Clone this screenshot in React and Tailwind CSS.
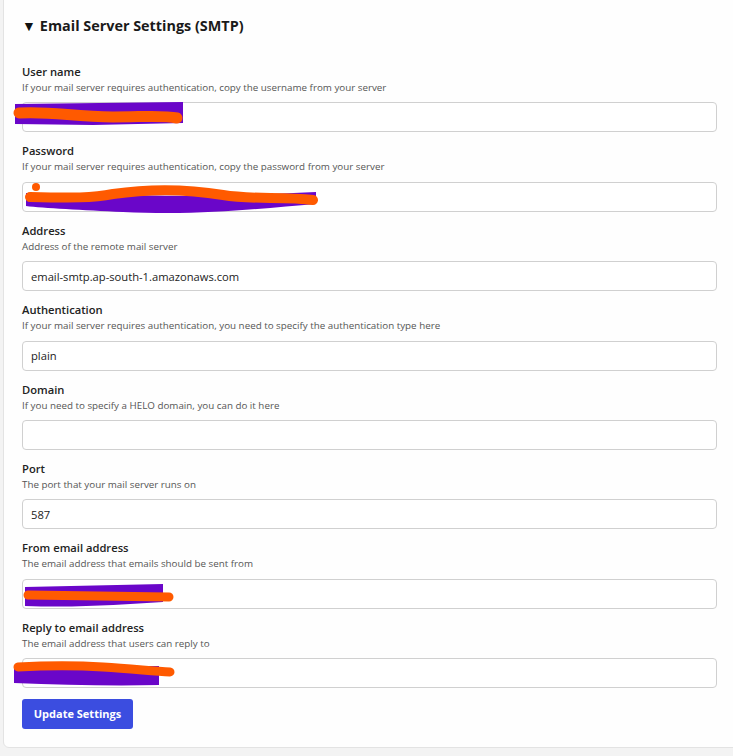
import React from "react";

const fields = [
  { label: "User name", help: "If your mail server requires authentication, copy the username from your server", value: "" },
  { label: "Password", help: "If your mail server requires authentication, copy the password from your server", value: "" },
  { label: "Address", help: "Address of the remote mail server", value: "email-smtp.ap-south-1.amazonaws.com" },
  { label: "Authentication", help: "If your mail server requires authentication, you need to specify the authentication type here", value: "plain" },
  { label: "Domain", help: "If you need to specify a HELO domain, you can do it here", value: "" },
  { label: "Port", help: "The port that your mail server runs on", value: "587" },
  { label: "From email address", help: "The email address that emails should be sent from", value: "" },
  { label: "Reply to email address", help: "The email address that users can reply to", value: "" },
];

// redaction scribbles drawn over the inputs, coords relative to the input box
const scribbles = {
  0: (
    <svg className="absolute left-[-9px] top-[-1px] overflow-visible" width="180" height="30">
      <path d="M2 3 L170 1 L170 22 L80 24 L2 23 Z" fill="#6a06c9" />
      <path d="M6 12 C40 10 60 16 100 16 C130 16 150 14 164 17" stroke="#ff5a00" strokeWidth="11" strokeLinecap="round" fill="none" />
    </svg>
  ),
  1: (
    <svg className="absolute left-[1px] top-[0px] overflow-visible" width="300" height="34">
      <path d="M3 11 C60 12 120 14 200 14 L293 10 L293 22 C240 26 180 34 100 30 C60 28 20 26 3 24 Z" fill="#6a06c9" />
      <path d="M7 15 C50 16 70 16 90 12 C130 6 170 8 200 13 C230 18 260 14 290 18" stroke="#ff5a00" strokeWidth="10" strokeLinecap="round" fill="none" />
      <circle cx="13" cy="5" r="4" fill="#ff5a00" />
    </svg>
  ),
  6: (
    <svg className="absolute left-[1px] top-[3px] overflow-visible" width="160" height="30">
      <path d="M2 5 L140 2 L140 20 C100 22 60 26 2 24 Z" fill="#6a06c9" />
      <path d="M5 13 L146 15" stroke="#ff5a00" strokeWidth="9" strokeLinecap="round" fill="none" />
    </svg>
  ),
  7: (
    <svg className="absolute left-[-9px] top-[3px] overflow-visible" width="170" height="30">
      <path d="M1 6 L146 5 L146 24 C100 25 50 24 1 22 Z" fill="#6a06c9" />
      <path d="M5 6 C40 4 60 4 90 6 C120 8 140 10 157 11" stroke="#ff5a00" strokeWidth="9" strokeLinecap="round" fill="none" />
    </svg>
  ),
};

function Field({ f, i }) {
  return (
    <div className="mb-[10px]">
      <div className="text-[11.2px] leading-[17px] font-semibold text-[#222]">{f.label}</div>
      <div className="text-[9.8px] leading-[15px] text-[#555]">{f.help}</div>
      <div className="relative mt-[7.4px]">
        <input
          readOnly
          value={f.value}
          className="block w-full h-[30px] rounded-[4px] border border-[#d0d0d0] bg-white px-[8px] text-[11.2px] text-[#222] outline-none"
        />
        {scribbles[i]}
      </div>
    </div>
  );
}

export default function App() {
  return (
    <div
      className="w-[733px] h-[756px] overflow-hidden bg-[#f3f3f3]"
      style={{ fontFamily: '"Segoe UI", "Open Sans", sans-serif' }}
    >
      <div className="ml-[3px] mr-[-10px] mt-[-10px] rounded-md border border-[#e3e3e3] bg-[#fefefe] pl-[18px] pr-[25px] pt-[25px] pb-[18px]">
        <div className="flex items-center gap-[4px] h-[20px]">
          <span className="text-[14px] leading-none text-[#111]">▼</span>
          <span className="text-[14.4px] font-bold text-[#1a1a1a]">Email Server Settings (SMTP)</span>
        </div>
        <div className="mt-[27px]">
          {fields.map((f, i) => (
            <Field key={f.label} f={f} i={i} />
          ))}
        </div>
        <button className="mt-[1px] h-[30px] w-[111px] rounded-[3px] bg-[#3b4de0] text-[11px] font-bold text-white">
          Update Settings
        </button>
      </div>
    </div>
  );
}
